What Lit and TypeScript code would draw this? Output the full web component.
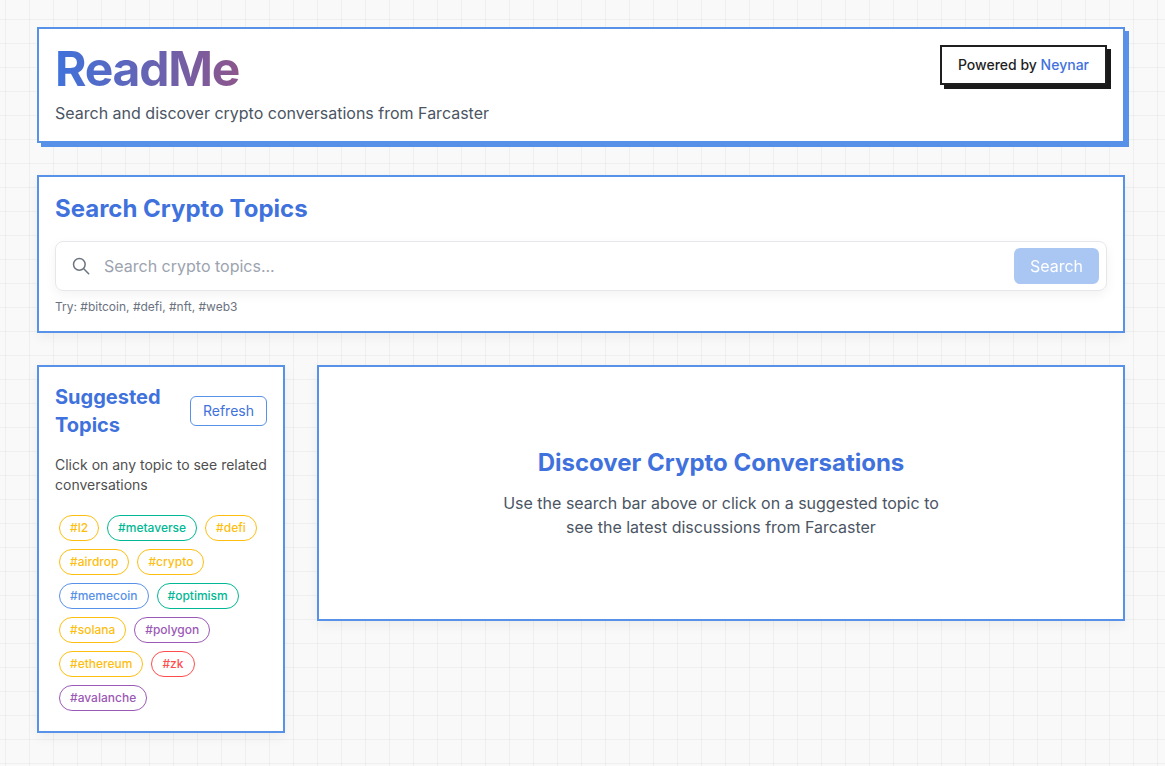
import { LitElement, html, css } from "lit";
import { customElement } from "lit/decorators.js";
import { classMap } from "lit/directives/class-map.js";

const TOPICS: { label: string; tone: string }[] = [
  { label: "#l2", tone: "yellow" },
  { label: "#metaverse", tone: "green" },
  { label: "#defi", tone: "yellow" },
  { label: "#airdrop", tone: "yellow" },
  { label: "#crypto", tone: "yellow" },
  { label: "#memecoin", tone: "blue" },
  { label: "#optimism", tone: "green" },
  { label: "#solana", tone: "yellow" },
  { label: "#polygon", tone: "purple" },
  { label: "#ethereum", tone: "yellow" },
  { label: "#zk", tone: "red" },
  { label: "#avalanche", tone: "purple" },
];

@customElement("app-root")
export class AppRoot extends LitElement {
  static styles = css`
    :host {
      display: block;
      box-sizing: border-box;
      min-height: 100vh;
      padding: 27px 40px 0 37px;
      font-family: "Inter", sans-serif;
      font-size: 16px;
      line-height: 24px;
      color: #1f1f1f;
      background-color: #f9f9f9;
      background-image:
        linear-gradient(rgba(0, 0, 0, 0.04) 1px, transparent 1px),
        linear-gradient(90deg, rgba(0, 0, 0, 0.04) 1px, transparent 1px);
      background-size: 24px 24px;
      background-position: 5px 19px;
    }
    * { box-sizing: border-box; margin: 0; }
    .page { display: flex; flex-direction: column; gap: 32px; }
    .card {
      background: #fff;
      border: 2px solid #5891e8;
      padding: 16px;
      box-shadow: 0 4px 12px rgba(0, 0, 0, 0.05);
    }
    .header {
      display: flex;
      justify-content: space-between;
      align-items: flex-start;
      box-shadow: 4px 4px 0 #5891e8;
    }
    .logo {
      width: fit-content;
      font-size: 48px;
      line-height: 48px;
      font-weight: 700;
      letter-spacing: -0.025em;
      margin-bottom: 8px;
      color: transparent;
      background: linear-gradient(90deg, #3f72dc, #8c568c);
      -webkit-background-clip: text;
      background-clip: text;
    }
    .muted { color: #4b5563; }
    .badge {
      border: 2px solid #1f1f1f;
      background: #fff;
      box-shadow: 4px 4px 0 #1a1a1a;
      padding: 8px 16px;
      font-size: 14px;
      line-height: 20px;
      font-weight: 500;
    }
    .badge span { color: #4272dd; }
    .title {
      font-size: 24px;
      line-height: 32px;
      font-weight: 700;
      color: #3f72dc;
    }
    .search {
      display: flex;
      align-items: center;
      height: 50px;
      margin: 16px 0 8px;
      padding: 0 7px 0 15px;
      border: 1px solid #e5e7eb;
      border-radius: 8px;
      box-shadow: 0 4px 12px rgba(0, 0, 0, 0.05);
    }
    .search svg { flex: none; width: 20px; height: 20px; color: #6b7280; }
    .search input {
      flex: 1;
      min-width: 0;
      border: 0;
      outline: 0;
      padding: 0 12px 0 13px;
      font: inherit;
      background: transparent;
    }
    .search input::placeholder { color: #9ca3af; opacity: 1; }
    .search button {
      border: 0;
      border-radius: 6px;
      padding: 6px 16px;
      font: inherit;
      color: #fff;
      background: #5891e8;
      opacity: 0.5;
    }
    .hint { font-size: 12px; line-height: 16px; color: #6b7280; }
    .columns {
      display: grid;
      grid-template-columns: repeat(4, minmax(0, 1fr));
      gap: 32px;
      align-items: start;
    }
    .suggested-head {
      display: flex;
      justify-content: space-between;
      align-items: center;
      margin-bottom: 16px;
    }
    .suggested-head .title { font-size: 20px; line-height: 28px; }
    .refresh {
      border: 1px solid #5891e8;
      border-radius: 6px;
      padding: 4px 12px;
      font: inherit;
      font-size: 14px;
      line-height: 20px;
      color: #3f72dc;
      background: #fff;
    }
    .note { font-size: 14px; line-height: 20px; color: #4f4f4f; margin-bottom: 16px; }
    .chips { display: flex; flex-wrap: wrap; }
    .chip {
      margin: 4px;
      padding: 4px 10px;
      border: 1px solid currentColor;
      border-radius: 13px;
      font: inherit;
      font-size: 12px;
      line-height: 16px;
      font-weight: 500;
      background: #fff;
    }
    .yellow { color: #fdbe10; }
    .green { color: #00b894; }
    .blue { color: #5891e8; }
    .purple { color: #9b59b6; }
    .red { color: #ff4d4d; }
    .discover { grid-column: span 3; padding: 80px 16px; text-align: center; }
    .discover p { max-width: 448px; margin: 12px auto 0; }
  `;

  render() {
    return html`
      <main class="page">
        <header class="card header">
          <div>
            <h1 class="logo">ReadMe</h1>
            <p class="muted">Search and discover crypto conversations from Farcaster</p>
          </div>
          <div class="badge">Powered by <span>Neynar</span></div>
        </header>

        <section class="card">
          <h2 class="title">Search Crypto Topics</h2>
          <div class="search">
            <svg viewBox="0 0 24 24" fill="none" stroke="currentColor" stroke-width="1.8" stroke-linecap="round" stroke-linejoin="round">
              <path d="M21.2 21.2l-6.2-6.2m2-5a7 7 0 11-14 0 7 7 0 0114 0z"></path>
            </svg>
            <input type="text" placeholder="Search crypto topics..." />
            <button>Search</button>
          </div>
          <p class="hint">Try: #bitcoin, #defi, #nft, #web3</p>
        </section>

        <div class="columns">
          <aside class="card">
            <div class="suggested-head">
              <h2 class="title">Suggested Topics</h2>
              <button class="refresh">Refresh</button>
            </div>
            <p class="note">Click on any topic to see related conversations</p>
            <div class="chips">
              ${TOPICS.map(
                (t) => html`<button class=${classMap({ chip: true, [t.tone]: true })}>${t.label}</button>`
              )}
            </div>
          </aside>
          <section class="card discover">
            <h2 class="title">Discover Crypto Conversations</h2>
            <p class="muted">Use the search bar above or click on a suggested topic to see the latest discussions from Farcaster</p>
          </section>
        </div>
      </main>
    `;
  }
}
